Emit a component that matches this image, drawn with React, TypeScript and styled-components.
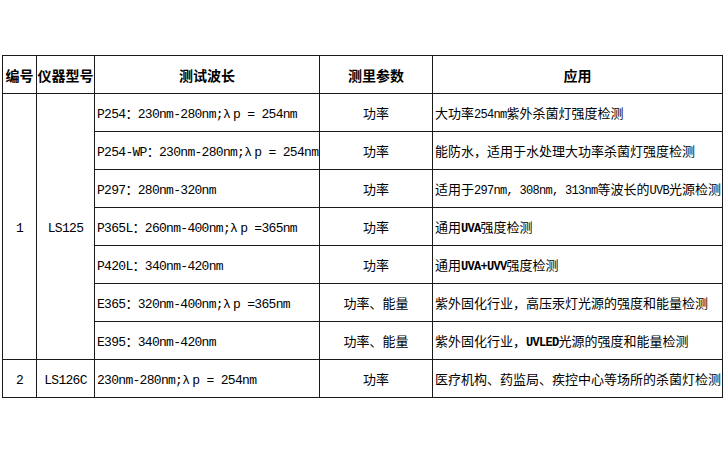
import React from "react";
import styled, { createGlobalStyle } from "styled-components";

const GlobalStyle = createGlobalStyle`
  html, body {
    margin: 0;
    padding: 0;
    background: #ffffff;
  }
`;

interface SpecRow {
  wave: React.ReactNode;
  param: string;
  usage: React.ReactNode;
}

const Page = styled.div`
  padding: 55px 0 0 2px;
  font-family: "Noto Sans CJK SC", "Liberation Sans", sans-serif;
  color: #000;
`;

const Table = styled.table`
  border-collapse: collapse;
  table-layout: fixed;
  width: 721px;
`;

const Col = styled.col<{ $w: number }>`
  width: ${(p) => p.$w}px;
`;

const HeadCell = styled.th`
  height: 37px;
  padding: 0;
  border: 1px solid #1a1a1a;
  font-size: 14px;
  font-weight: 700;
  text-align: center;
  white-space: nowrap;
  overflow: hidden;
`;

const Cell = styled.td<{ $align?: "left" | "center" }>`
  height: 37px;
  padding: 0 0 0 ${(p) => (p.$align === "center" ? 0 : 2)}px;
  border: 1px solid #1a1a1a;
  font-size: 13px;
  text-align: ${(p) => p.$align ?? "left"};
  vertical-align: middle;
  white-space: nowrap;
  overflow: hidden;
`;

// 波长、型号：SimSun 风格的半角等宽字
const Mono = styled.span`
  font-family: "Liberation Mono", "Noto Sans CJK SC", monospace;
  font-size: 13px;
  letter-spacing: -0.7px;
  white-space: pre;
`;

const Lambda = styled.span`
  margin-right: 3px;
`;

// 应用列中夹杂的西文
const Latin = styled.span<{ $bold?: boolean }>`
  font-family: "Liberation Mono", monospace;
  font-size: 12px;
  letter-spacing: -0.7px;
  font-weight: ${(p) => (p.$bold ? 700 : 400)};
`;

const L = () => <Lambda>λ</Lambda>;

const ls125: SpecRow[] = [
  {
    wave: <>P254：230nm-280nm;<L />p = 254nm</>,
    param: "功率",
    usage: <>大功率<Latin>254nm</Latin>紫外杀菌灯强度检测</>,
  },
  {
    wave: <>P254-WP：230nm-280nm;<L />p = 254nm</>,
    param: "功率",
    usage: <>能防水，适用于水处理大功率杀菌灯强度检测</>,
  },
  {
    wave: <>P297：280nm-320nm</>,
    param: "功率",
    usage: (
      <>
        适用于<Latin>297nm, 308nm, 313nm</Latin>等波长的<Latin>UVB</Latin>光源检测
      </>
    ),
  },
  {
    wave: <>P365L：260nm-400nm;<L />p =365nm</>,
    param: "功率",
    usage: <>通用<Latin $bold>UVA</Latin>强度检测</>,
  },
  {
    wave: <>P420L：340nm-420nm</>,
    param: "功率",
    usage: <>通用<Latin $bold>UVA+UVV</Latin>强度检测</>,
  },
  {
    wave: <>E365：320nm-400nm;<L />p =365nm</>,
    param: "功率、能量",
    usage: <>紫外固化行业，高压汞灯光源的强度和能量检测</>,
  },
  {
    wave: <>E395：340nm-420nm</>,
    param: "功率、能量",
    usage: <>紫外固化行业，<Latin $bold>UVLED</Latin>光源的强度和能量检测</>,
  },
];

const App: React.FC = () => {
  return (
    <Page>
      <GlobalStyle />
      <Table>
        <colgroup>
          <Col $w={34} />
          <Col $w={58} />
          <Col $w={225} />
          <Col $w={113} />
          <Col $w={290} />
        </colgroup>
        <thead>
          <tr>
            <HeadCell>编号</HeadCell>
            <HeadCell>仪器型号</HeadCell>
            <HeadCell>测试波长</HeadCell>
            <HeadCell>测里参数</HeadCell>
            <HeadCell>应用</HeadCell>
          </tr>
        </thead>
        <tbody>
          {ls125.map((row, i) => (
            <tr key={i}>
              {i === 0 && (
                <>
                  <Cell $align="center" rowSpan={ls125.length}>
                    <Mono>1</Mono>
                  </Cell>
                  <Cell $align="center" rowSpan={ls125.length}>
                    <Mono>LS125</Mono>
                  </Cell>
                </>
              )}
              <Cell>
                <Mono>{row.wave}</Mono>
              </Cell>
              <Cell $align="center">{row.param}</Cell>
              <Cell>{row.usage}</Cell>
            </tr>
          ))}
          <tr>
            <Cell $align="center">
              <Mono>2</Mono>
            </Cell>
            <Cell $align="center">
              <Mono>LS126C</Mono>
            </Cell>
            <Cell>
              <Mono>
                230nm-280nm;<L />p = 254nm
              </Mono>
            </Cell>
            <Cell $align="center">功率</Cell>
            <Cell>医疗机构、药监局、疾控中心等场所的杀菌灯检测</Cell>
          </tr>
        </tbody>
      </Table>
    </Page>
  );
};

export default App;
